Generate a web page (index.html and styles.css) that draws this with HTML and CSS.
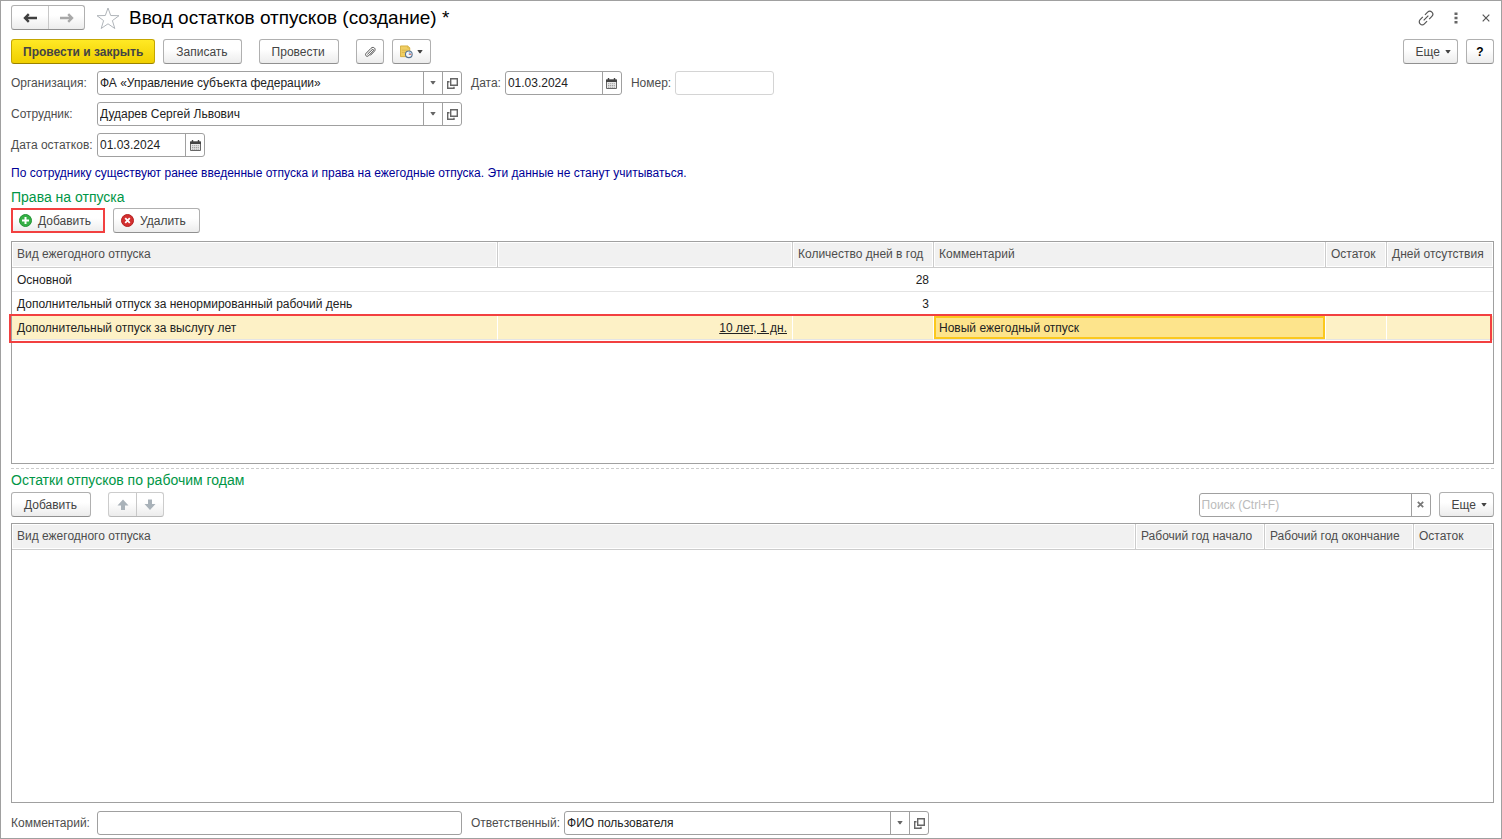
FILE: index.html
```html
<!DOCTYPE html>
<html lang="ru">
<head>
<meta charset="utf-8">
<title>Ввод остатков отпусков (создание)</title>
<link rel="stylesheet" href="styles.css">
</head>
<body>
<svg class="sprite" aria-hidden="true">
  <symbol id="i-caret" viewBox="0 0 6 4"><path d="M.3 0h5.400L3.500 3.200h-1z" fill="currentColor"/></symbol>
  <symbol id="i-open" viewBox="0 0 11 11"><path d="M3.700.7h6.600v6.600H3.700z M2.500 3.700H.7v6.600h6.300V8.700" fill="none" stroke="currentColor" stroke-width="1.400"/></symbol>
  <symbol id="i-calendar" viewBox="0 0 11 11"><path d="M.5 2h10v8.500H.5z" fill="#e8e8e8" stroke="#666"/><path d="M0 1.500h11V4H0z" fill="#444"/><path d="M2.500 0v2M8.500 0v2" stroke="#444" stroke-width="1.400"/><path d="M2 5.700h7M2 7.500h7M2 9.200h7" stroke="#999" stroke-width=".9" stroke-dasharray="1.200 .7"/></symbol>
</svg>
<main class="window">
  <header class="titlebar">
    <div class="nav">
      <button type="button" aria-label="Назад"><svg width="14" height="10" viewBox="0 0 14 10"><path d="M14 5H2.500M5.800 1.200 2 5l3.800 3.800" fill="none" stroke="#404040" stroke-width="2.400"/></svg></button>
      <button type="button" aria-label="Вперед"><svg width="14" height="10" viewBox="0 0 14 10"><path d="M0 5h11.500M8.200 1.200 12 5 8.200 8.800" fill="none" stroke="#a8a8a8" stroke-width="2.400"/></svg></button>
    </div>
    <button class="bare" type="button" aria-label="В избранное"><svg width="24" height="22" viewBox="0 0 24 22"><path d="M12 1l2.700 7.500 8.300.2-6.600 4.900 2.400 7.900L12 16.800l-6.800 4.700 2.400-7.900L1 8.700l8.300-.2z" fill="#fff" stroke="#b0b5ba"/></svg></button>
    <h1>Ввод остатков отпусков (создание) *</h1>
    <div class="window-tools">
      <button class="bare" type="button" aria-label="Ссылка"><svg width="16" height="16" viewBox="0 0 16 16"><g transform="rotate(-45 8 8)" fill="none" stroke="#555" stroke-width="1.200"><path d="M6.500 5H2.700a3 3 0 0 0 0 6h3.800M9.500 5h3.800a3 3 0 0 1 0 6H9.500M4.700 8h6.600"/></g></svg></button>
      <button class="bare" type="button" aria-label="Меню"><svg width="4" height="12" viewBox="0 0 4 12"><path d="M.5.500h3v2.600h-3zM.5 4.700h3v2.600h-3zM.5 8.900h3v2.600h-3z" fill="#666"/></svg></button>
      <button class="bare" type="button" aria-label="Закрыть"><svg width="16" height="16" viewBox="0 0 16 16"><path d="M4.700 4.700l6.600 6.600M11.300 4.700l-6.600 6.600" stroke="#555" stroke-width="1.200"/></svg></button>
    </div>
  </header>

  <div class="commands">
    <button class="btn primary" type="button">Провести и закрыть</button>
    <button class="btn" type="button">Записать</button>
    <button class="btn apart" type="button">Провести</button>
    <button class="btn apart icon-only" type="button" aria-label="Файлы"><svg width="12" height="12" viewBox="0 0 12 12"><path d="M3.400 8.400 8 3.800c1-1 2.200.2 1.200 1.200L4.600 9.700c-1.800 1.800-4.200-.7-2.500-2.400L7 2.300C9.500-.2 12.600 3 10.300 5.400L6.200 9.500" fill="none" stroke="#555"/></svg></button>
    <button class="btn icon-only" type="button" aria-label="Создать на основании"><svg width="13" height="14" viewBox="0 0 14 14"><path d="M.5.500h8l2 2v9.500H.5z" fill="#f0ce62" stroke="#d4ad3c"/><path d="M8.500.500v2h2" fill="#fff3c0" stroke="#d4ad3c"/><path d="M2 5h6M2 7.500h4" stroke="#dab54d"/><circle cx="9.500" cy="9.500" r="3.600" fill="#f4f8fc" stroke="#557392" stroke-width="1.200"/><path d="M9.500 6.800v2.700h2.700a2.700 2.700 0 0 0-2.700-2.700z" fill="#9dc4e8"/><path d="M9.500 9.500h2.700" stroke="#d45b4c"/></svg><svg class="caret" width="6" height="4"><use href="#i-caret"/></svg></button>
    <button class="btn more push" type="button">Еще<svg class="caret" width="6" height="4"><use href="#i-caret"/></svg></button>
    <button class="btn help" type="button">?</button>
  </div>

  <div class="fields">
    <label class="lead" for="org">Организация:</label>
    <div class="box wide"><input id="org" type="text" value="ФА «Управление субъекта федерации»"><button type="button" aria-label="Выбрать организацию"><svg width="6" height="4"><use href="#i-caret"/></svg></button><button type="button" aria-label="Открыть организацию"><svg width="11" height="11"><use href="#i-open"/></svg></button></div>
    <label class="next" for="date">Дата:</label>
    <div class="box date"><input id="date" type="text" value="01.03.2024"><button type="button" aria-label="Календарь"><svg width="11" height="11"><use href="#i-calendar"/></svg></button></div>
    <label class="next" for="num">Номер:</label>
    <div class="box number"><input id="num" type="text"></div>
  </div>
  <div class="fields">
    <label class="lead" for="emp">Сотрудник:</label>
    <div class="box wide"><input id="emp" type="text" value="Дударев Сергей Львович"><button type="button" aria-label="Выбрать сотрудника"><svg width="6" height="4"><use href="#i-caret"/></svg></button><button type="button" aria-label="Открыть сотрудника"><svg width="11" height="11"><use href="#i-open"/></svg></button></div>
  </div>
  <div class="fields">
    <label class="lead" for="rest">Дата остатков:</label>
    <div class="box date-short"><input id="rest" type="text" value="01.03.2024"><button type="button" aria-label="Календарь остатков"><svg width="11" height="11"><use href="#i-calendar"/></svg></button></div>
  </div>

  <p class="note">По сотруднику существуют ранее введенные отпуска и права на ежегодные отпуска. Эти данные не станут учитываться.</p>

  <section class="block rights">
    <h2>Права на отпуска</h2>
    <div class="commands">
      <button class="btn with-icon marked" type="button"><svg width="13" height="13" viewBox="0 0 13 13"><circle cx="6.500" cy="6.500" r="6" fill="#35b045" stroke="#239336"/><path d="M6.500 3v7M3 6.500h7" stroke="#fff" stroke-width="2"/></svg>Добавить</button>
      <button class="btn with-icon" type="button"><svg width="13" height="13" viewBox="0 0 13 13"><circle cx="6.500" cy="6.500" r="6" fill="#d32f2f" stroke="#b32020"/><path d="M4.200 4.200l4.600 4.600M8.800 4.200 4.200 8.800" stroke="#fff" stroke-width="1.800"/></svg>Удалить</button>
    </div>
    <div class="grid">
      <table>
        <colgroup><col class="c-kind"><col class="c-term"><col class="c-days"><col><col class="c-rest"><col class="c-absent"></colgroup>
        <thead><tr><th>Вид ежегодного отпуска</th><th></th><th>Количество дней в год</th><th>Комментарий</th><th>Остаток</th><th>Дней отсутствия</th></tr></thead>
        <tbody>
          <tr><td>Основной</td><td></td><td class="num">28</td><td></td><td></td><td></td></tr>
          <tr><td>Дополнительный отпуск за ненормированный рабочий день</td><td></td><td class="num">3</td><td></td><td></td><td></td></tr>
          <tr class="selected"><td>Дополнительный отпуск за выслугу лет</td><td class="num"><a href="#">10 лет, 1 дн.</a></td><td></td><td class="current">Новый ежегодный отпуск</td><td></td><td></td></tr>
        </tbody>
      </table>
    </div>
  </section>

  <section class="block balances">
    <h2>Остатки отпусков по рабочим годам</h2>
    <div class="commands">
      <button class="btn" type="button">Добавить</button>
      <div class="nav move apart">
        <button type="button" aria-label="Вверх"><svg width="12" height="12" viewBox="0 0 12 12"><path d="M6 .5 11.500 6.500H8V11H4V6.500H.5z" fill="#a9b2b9"/></svg></button>
        <button type="button" aria-label="Вниз"><svg width="12" height="12" viewBox="0 0 12 12"><path d="M6 11 11.500 5H8V.5H4V5H.5z" fill="#a9b2b9"/></svg></button>
      </div>
      <div class="box search push"><input type="text" aria-label="Поиск" placeholder="Поиск (Ctrl+F)"><button type="button" aria-label="Очистить"><svg width="7" height="7" viewBox="0 0 7 7"><path d="M.8.800l5.400 5.400M6.200.8.800 6.200" stroke="#777" stroke-width="1.700"/></svg></button></div>
      <button class="btn more" type="button">Еще<svg class="caret" width="6" height="4"><use href="#i-caret"/></svg></button>
    </div>
    <div class="grid">
      <table>
        <colgroup><col><col class="c-from"><col class="c-to"><col class="c-left"></colgroup>
        <thead><tr><th>Вид ежегодного отпуска</th><th>Рабочий год начало</th><th>Рабочий год окончание</th><th>Остаток</th></tr></thead>
      </table>
    </div>
  </section>

  <footer class="fields">
    <label class="lead" for="comment">Комментарий:</label>
    <div class="box wide"><input id="comment" type="text"></div>
    <label class="next" for="resp">Ответственный:</label>
    <div class="box wide"><input id="resp" type="text" value="ФИО пользователя"><button type="button" aria-label="Выбрать ответственного"><svg width="6" height="4"><use href="#i-caret"/></svg></button><button type="button" aria-label="Открыть ответственного"><svg width="11" height="11"><use href="#i-open"/></svg></button></div>
  </footer>
</main>
</body>
</html>
```
FILE: styles.css
```css
* { box-sizing: border-box; }
body {
  margin: 0;
  background: #fff;
  color: #333;
  font: 12px/16px "Liberation Sans", Arial, sans-serif;
}
button, input { font: inherit; color: inherit; margin: 0; }
svg { display: block; flex: none; }
.sprite { position: absolute; width: 0; height: 0; }

.window {
  display: flex;
  flex-direction: column;
  min-height: 100vh;
  padding: 4px 7px 3px 10px;
  border: 1px solid #a0a0a0;
}

.titlebar { display: flex; align-items: center; height: 25px; margin-bottom: 9px; }
h1 { margin: 0 0 0 9px; font-size: 19px; line-height: 24px; font-weight: 400; color: #000; }
.bare { display: flex; padding: 0; border: 0; background: none; }
.window-tools { display: flex; align-items: center; gap: 20px; margin-left: auto; }

.nav {
  display: flex;
  height: 25px;
  border: 1px solid #b0b0b0;
  border-bottom-color: #909090;
  border-radius: 3px;
  background: linear-gradient(#fff 40%, #ececec);
}
.nav button {
  display: flex;
  align-items: center;
  justify-content: center;
  width: 36px;
  padding: 0;
  border: 0;
  background: none;
}
.nav button + button { border-left: 1px solid #c8c8c8; }
.titlebar .nav { margin-right: 11px; }
.nav.move { border-color: #ccc; border-bottom-color: #b8b8b8; }
.nav.move button { width: 27px; }

.commands { display: flex; align-items: center; gap: 8px; }
.btn {
  display: flex;
  align-items: center;
  justify-content: center;
  height: 25px;
  padding: 0 13px 0 12px;
  border: 1px solid #b0b0b0;
  border-bottom-color: #909090;
  border-radius: 3px;
  background: linear-gradient(#fff 40%, #ececec);
  color: #444;
  white-space: nowrap;
}
.primary {
  padding: 0 11px;
  border-color: #c4a600;
  border-bottom-color: #9a8200;
  background: linear-gradient(#ffe925, #f0cf00);
  font-weight: 700;
}
.apart { margin-left: 9px; }
.push { margin-left: auto; }
.icon-only { padding: 0 7px; }
.caret { margin-left: 5px; color: #444; }
.icon-only .caret { margin-left: 4px; }
.more { padding-right: 6px; }
.help { width: 28px; padding: 0; font-weight: 700; color: #000; }
.with-icon { gap: 6px; padding-left: 7px; }
.marked { outline: 2px solid #f24040; outline-offset: -2px; border-radius: 0; }

.fields { display: flex; align-items: center; margin-top: 7px; color: #4d4d4d; }
.lead { width: 86px; white-space: nowrap; }
.next { margin: 0 4px 0 9px; white-space: nowrap; }
.box {
  display: flex;
  height: 24px;
  border: 1px solid #a0a0a0;
  border-radius: 3px;
  background: #fff;
  color: #222;
}
.box input {
  flex: 1;
  min-width: 0;
  padding: 0 2px;
  border: 0;
  outline: 0;
  background: none;
}
.box input::placeholder { color: #bbb; }
.box button {
  display: flex;
  align-items: center;
  justify-content: center;
  width: 19px;
  padding: 0;
  border: 0;
  border-left: 1px solid #a0a0a0;
  background: none;
  color: #666;
}
.wide { width: 365px; }
.date { width: 117px; }
.date-short { width: 108px; }
.number { width: 99px; border-color: #d4d4d4; }
.search { width: 232px; }

.note { margin: 8px 0 7px; color: #000096; }

.block { display: flex; flex-direction: column; }
.rights { flex: 5 0 0; }
.balances { flex: 6 0 0; margin-top: 4px; border-top: 1px dashed #ccc; padding-top: 2px; }
h2 { margin: 0 0 2px; font-size: 14px; line-height: 18px; font-weight: 400; color: #009646; }
.balances h2 { margin-bottom: 3px; }

.grid { flex: 1; margin-top: 8px; border: 1px solid #a0a0a0; }
.balances .grid { margin-top: 6px; }
table { width: 100%; border-collapse: separate; border-spacing: 0; table-layout: fixed; }
th, td { padding: 0 5px; text-align: left; font-weight: 400; white-space: nowrap; }
th {
  height: 26px;
  padding-bottom: 1px;
  border-right: 1px solid #ccc;
  border-bottom: 1px solid #ccc;
  background: #f1f1f1;
  box-shadow: inset 0 0 0 1px #fff;
  color: #4d4d4d;
}
th:last-child { border-right: 0; }
td { height: 24px; border-bottom: 1px solid #e4e4e4; color: #222; }
td.num { text-align: right; }
a { color: inherit; }
tbody tr:nth-child(2) td { border-bottom-color: transparent; }
.selected { position: relative; }
.selected td { background: #fdf1c6; border-right: 1px solid #fff; }
.selected td:last-child { border-right: 0; }
.selected .current { background: #fde48c; box-shadow: inset 0 0 0 2px #fbc81e; }
.selected td:last-child::after {
  content: "";
  position: absolute;
  inset: -2px 1px -3px -3px;
  border: 2px solid #f24040;
  pointer-events: none;
}
.c-kind { width: 486px; }
.c-term { width: 295px; }
.c-days { width: 141px; }
.c-rest { width: 61px; }
.c-absent { width: 106px; }
.c-from { width: 129px; }
.c-to { width: 149px; }
.c-left { width: 79px; }
footer.fields { margin-top: 8px; }
```
